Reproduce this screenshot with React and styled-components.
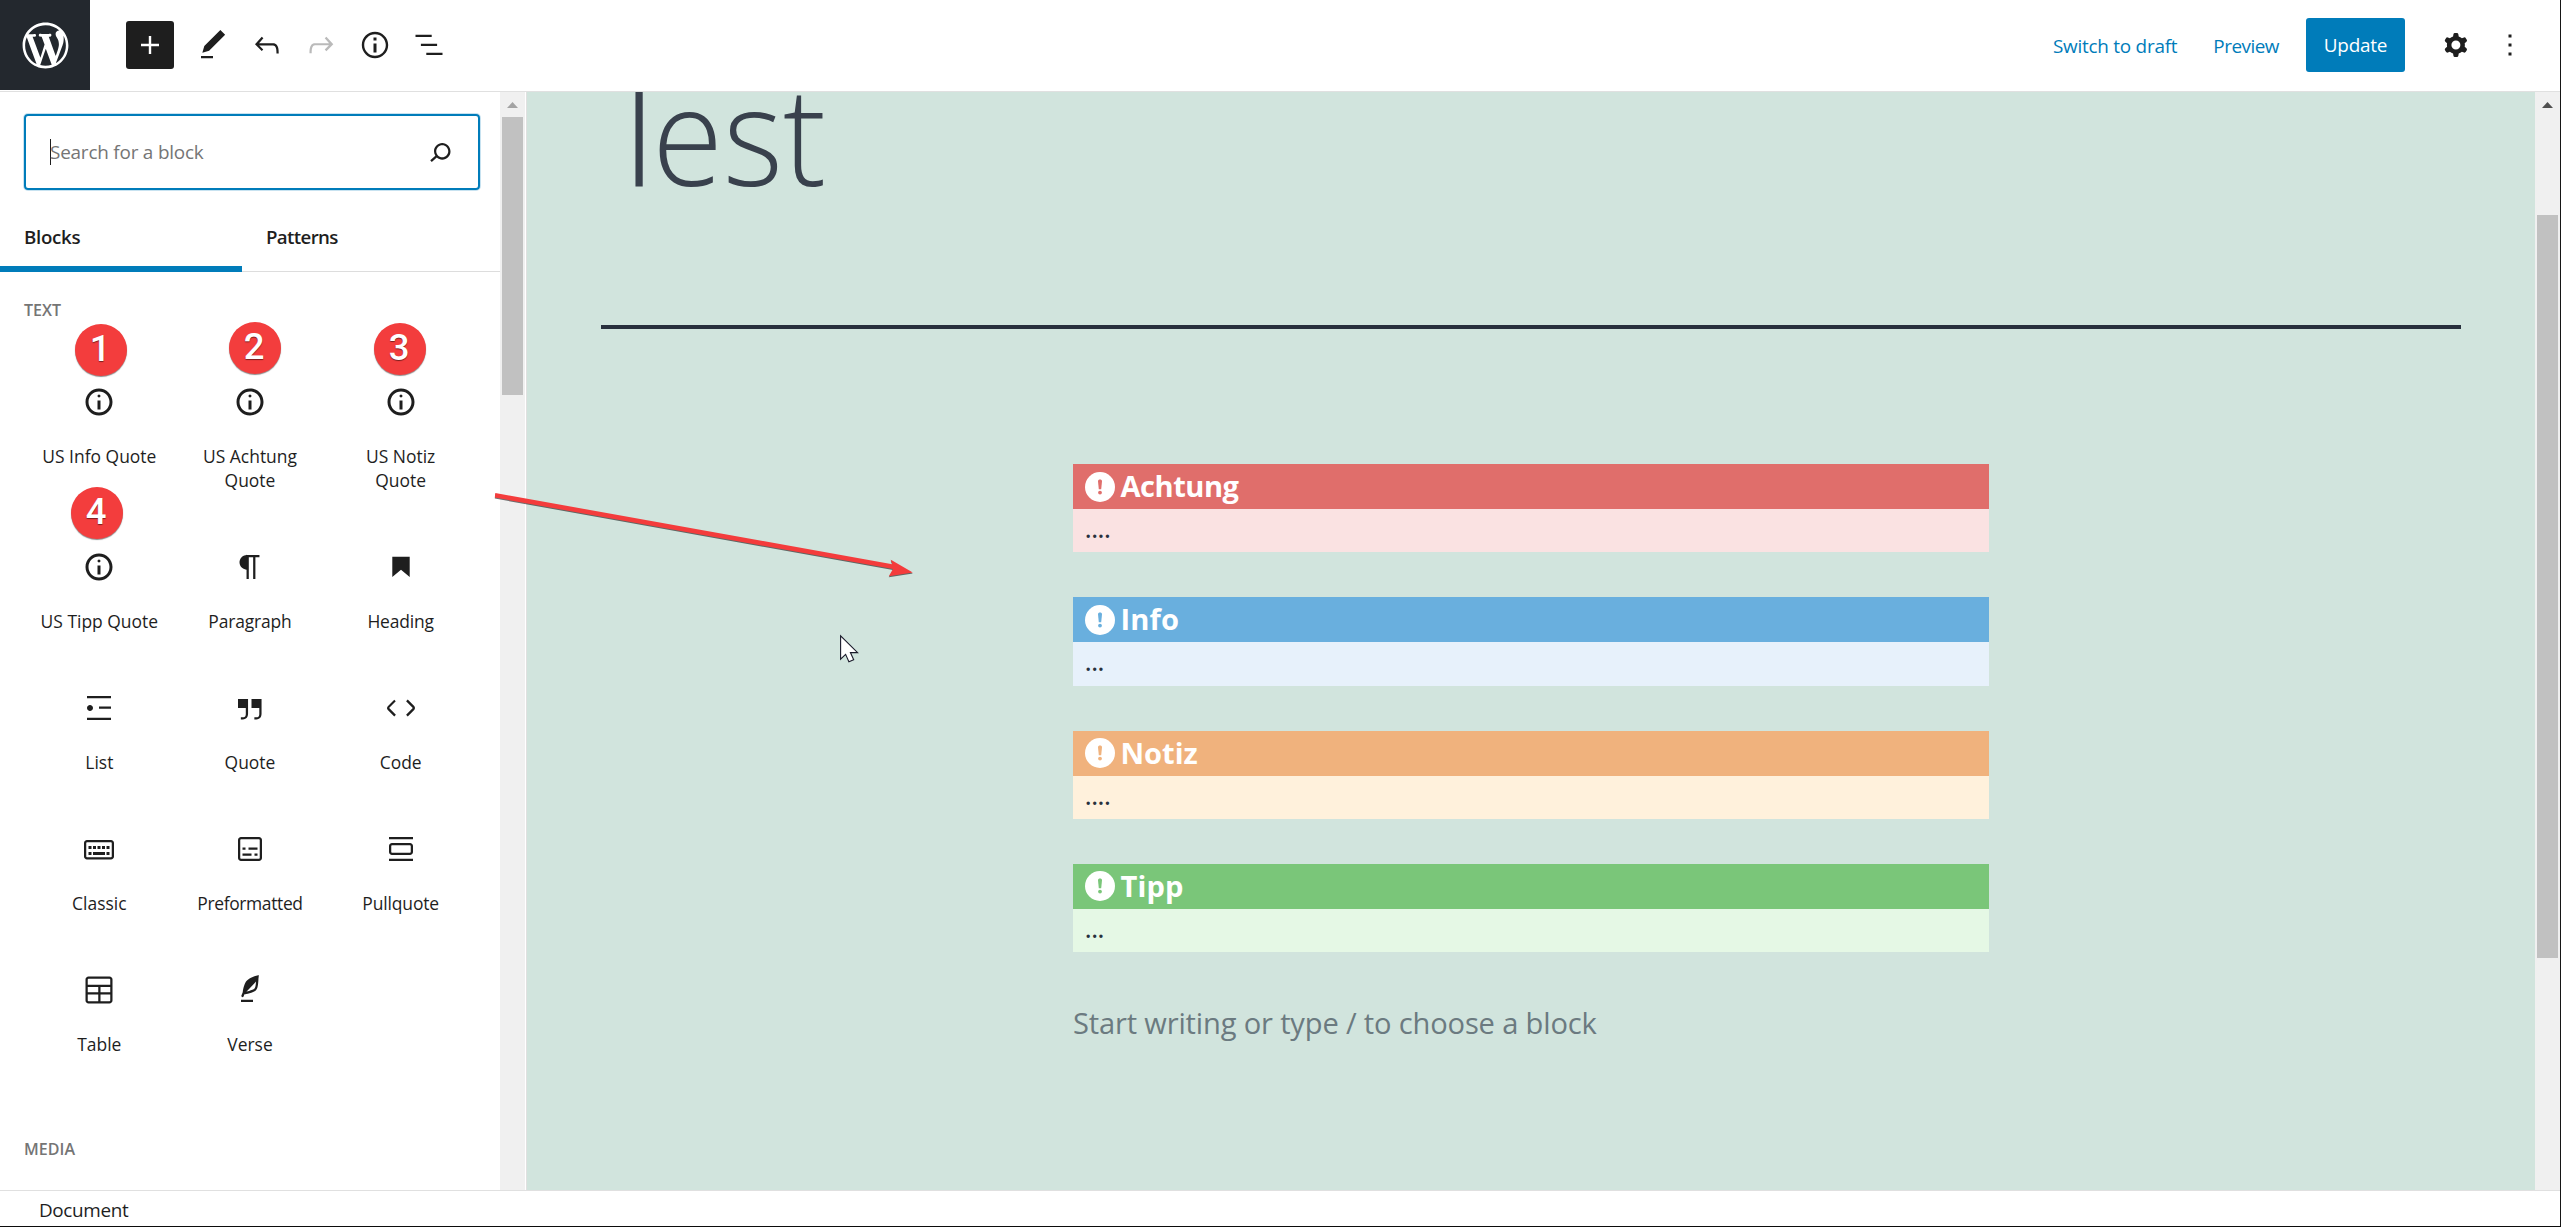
import React from "react";
import styled, { createGlobalStyle } from "styled-components";

const GlobalStyle = createGlobalStyle`
  * { box-sizing: border-box; }
  body {
    margin: 0;
    background: #fff;
    overflow: hidden;
    font-family: "Open Sans", "Noto Sans", sans-serif;
    color: #1e1e1e;
  }
`;

const Frame = styled.div`
  position: relative;
  display: flex;
  flex-direction: column;
  width: 2561px;
  height: 1227px;
  overflow: hidden;
  background: #fff;
  border-right: 1px solid #161616;
  border-bottom: 1px solid #0c0c0c;
`;

/* ---------- header ---------- */

const Header = styled.header`
  flex: none;
  display: flex;
  align-items: flex-start;
  justify-content: space-between;
  height: 92px;
  padding-right: 23px;
  border-bottom: 1px solid #e0e0e0;
`;

const HeaderGroup = styled.div`
  display: flex;
  align-items: center;
  height: 90px;
`;

const HomeLink = styled.div`
  display: flex;
  align-items: center;
  justify-content: center;
  width: 90px;
  height: 90px;
  background: #23282e;
  color: #fff;
`;

const AddButton = styled.button`
  display: flex;
  align-items: center;
  justify-content: center;
  width: 48px;
  height: 48px;
  margin: 0 12px 0 36px;
  padding: 0;
  border: 0;
  border-radius: 3px;
  background: #1e1e1e;
  color: #fff;
`;

const ToolButton = styled.button`
  display: flex;
  align-items: center;
  justify-content: center;
  width: 54px;
  height: 54px;
  padding: 0;
  border: 0;
  background: none;
  color: #1e1e1e;
  opacity: ${(p) => (p.$disabled ? 0.3 : 1)};
`;

const TextButton = styled.button`
  margin-right: ${(p) => p.$gap}px;
  padding: 1px 0 0;
  border: 0;
  background: none;
  color: #007cba;
  font: 400 18.9px/36px "Open Sans", sans-serif;
  letter-spacing: ${(p) => p.$track}px;
`;

const UpdateButton = styled.button`
  width: 99px;
  height: 54px;
  margin-right: 24px;
  padding: 1px 0 0;
  border: 0;
  border-radius: 3px;
  background: #007cba;
  color: #fff;
  font: 400 18.9px/53px "Open Sans", sans-serif;
  letter-spacing: -0.23px;
`;

/* ---------- body ---------- */

const Body = styled.div`
  flex: 1;
  display: flex;
  min-height: 0;
`;

const Inserter = styled.aside`
  flex: none;
  display: flex;
  width: 527px;
  border-right: 1px solid #e0e0e0;
`;

const InserterMain = styled.div`
  width: 500px;
  overflow: hidden;
`;

const SearchBox = styled.div`
  display: flex;
  align-items: center;
  justify-content: space-between;
  width: 456px;
  height: 76px;
  margin: 22px 0 0 24px;
  padding: 0 20px 0 24px;
  border: 2px solid #007cba;
  border-radius: 4px;
  box-shadow: 0 0 0 1px rgba(0, 124, 186, 0.22);
`;

const SearchText = styled.span`
  height: 26px;
  border-left: 1px solid #1e1e1e;
  color: #757575;
  font-size: 18.9px;
  line-height: 27px;
  letter-spacing: -0.2px;
  white-space: nowrap;
  text-indent: -1px;
`;

const Tabs = styled.div`
  display: flex;
  height: 70px;
  margin-top: 12px;
  box-shadow: inset 0 -1px 0 #ddd;
`;

const Tab = styled.div`
  width: 242px;
  padding-left: 24px;
  border-bottom: 6px solid ${(p) => (p.$active ? "#007cba" : "transparent")};
  font-size: 18.7px;
  font-weight: 600;
  line-height: 70px;
  letter-spacing: ${(p) => p.$track}px;
`;

const SectionTitle = styled.h2`
  margin: ${(p) => p.$top}px 0 0 24px;
  color: #757575;
  font-size: 16px;
  font-weight: 600;
  line-height: 24px;
  letter-spacing: 0.05px;
  text-transform: uppercase;
`;

const BlockGrid = styled.div`
  display: grid;
  grid-template-columns: repeat(3, minmax(0, 1fr));
  width: 452px;
  margin: 41px 0 0 24px;
`;

const Tile = styled.div`
  display: flex;
  flex-direction: column;
  align-items: center;
  gap: 15px;
  padding: 12px 0 36px;
`;

const TileIcon = styled.span`
  display: flex;
  align-items: center;
  justify-content: center;
  width: 54px;
  height: 54px;
`;

const TileLabel = styled.span`
  font-size: 17.46px;
  line-height: 24px;
  letter-spacing: ${(p) => p.$track || 0}px;
  text-align: center;
  white-space: pre;
`;

const Scrollbar = styled.div`
  flex: none;
  display: flex;
  flex-direction: column;
  align-items: center;
  width: 25px;
  background: #f0f0f0;
`;

const ScrollArrow = styled.span`
  width: 11px;
  height: 6px;
  margin-top: 10px;
  background: ${(p) => p.$color};
  clip-path: polygon(50% 0, 100% 100%, 0 100%);
`;

const ScrollThumb = styled.span`
  width: 21px;
  height: ${(p) => p.$size}px;
  margin-top: ${(p) => p.$offset}px;
  background: #c1c1c1;
`;

/* ---------- canvas ---------- */

const Canvas = styled.main`
  flex: 1;
  min-width: 0;
  padding: 0 74px;
  overflow: hidden;
  background: #d1e4dd;
  color: #28303d;
`;

const PostTitle = styled.h1`
  margin: -27px 0 0 1px;
  color: #39414d;
  font-size: 137px;
  font-weight: 300;
  line-height: 136px;
  white-space: nowrap;
  transform: scaleX(0.94);
  transform-origin: left;
`;

const Initial = styled.span`
  margin-right: -25.5px;
  font-size: 1.1em;
  line-height: 0;
`;

const Separator = styled.hr`
  height: 4px;
  margin: 124px 0 0;
  border: 0;
  background: #28303d;
`;

const Column = styled.div`
  display: flex;
  flex-direction: column;
  gap: 45px;
  width: 916px;
  margin: 135px auto 0;
`;

const Callout = styled.section`
  display: flex;
  flex-direction: column;
  height: 88.33px;
  background: ${(p) => p.$body};
`;

const CalloutHead = styled.header`
  display: flex;
  align-items: center;
  gap: 5.5px;
  height: 45px;
  padding-left: 12px;
  background: ${(p) => p.$color};
  color: #fff;
  font-size: 29.1px;
  font-weight: 700;
  line-height: 45px;
  letter-spacing: ${(p) => p.$track}px;
`;

const CalloutBody = styled.p`
  margin: 0;
  padding-left: 11.5px;
  font-size: 28px;
  line-height: 36px;
  letter-spacing: -0.95px;
`;

const Prompt = styled.p`
  margin: 1px 0 0 0;
  color: #6b7a80;
  font-size: 29.1px;
  line-height: 50px;
  letter-spacing: -0.165px;
`;

/* ---------- footer ---------- */

const Footer = styled.footer`
  flex: none;
  height: 36px;
  padding-left: 39px;
  border-top: 1px solid #e0e0e0;
  font-size: 18.9px;
  line-height: 38px;
  letter-spacing: -0.35px;
`;

/* ---------- annotations ---------- */

const Badge = styled.span`
  position: absolute;
  left: ${(p) => p.$x}px;
  top: ${(p) => p.$y}px;
  width: 52px;
  height: 52px;
  padding-right: 2px;
  border-radius: 50%;
  background: #f33d3d;
  box-shadow: 0 1px 1px rgba(0, 0, 0, 0.45);
  color: #fff;
  font: 500 36.5px/49px Roboto, "Liberation Sans", sans-serif;
  text-align: center;
  text-shadow: 0 1px 1px rgba(0, 0, 0, 0.5);
`;

const Arrow = styled.svg`
  position: absolute;
  left: 485px;
  top: 485px;
  filter: drop-shadow(0 1px 0.6px rgba(0, 0, 0, 0.55));
`;

const Pointer = styled.svg`
  position: absolute;
  left: 838px;
  top: 633px;
`;

const PATHS = {
  plus: "M18 11.2h-5.2V6h-1.6v5.2H6v1.6h5.2V18h1.6v-5.2H18z",
  edit: "M20.1 5.1L16.9 2 6.2 12.7l-1.3 4.4 4.5-1.3L20.1 5.1zM4 20.8h8v-1.5H4v1.5z",
  undo: "M18.3 11.7c-.6-.6-1.4-.9-2.3-.9H6.7l2.9-3.3-1.1-1-4.5 5L8.5 16l1-1-2.7-2.7H16c.5 0 .9.2 1.3.5 1 1 1 3.4 1 4.5v.3h1.5v-.2c0-1.5 0-4.3-1.5-5.7z",
  redo: "M15.6 6.5l-1.1 1 2.9 3.3H8c-.9 0-1.7.3-2.3.9-1.4 1.5-1.4 4.2-1.4 5.6v.2h1.5v-.3c0-1.1 0-3.5 1-4.5.3-.3.7-.5 1.3-.5h9.2L14.5 15l1.1 1.1 4.6-4.6-4.6-5z",
  info: "M12 3.2c-4.8 0-8.8 3.9-8.8 8.8 0 4.8 3.9 8.8 8.8 8.8 4.8 0 8.8-3.9 8.8-8.8 0-4.8-4-8.8-8.8-8.8zm0 16c-4 0-7.2-3.3-7.2-7.2C4.8 8 8 4.8 12 4.8s7.2 3.3 7.2 7.2c0 4-3.2 7.2-7.2 7.2zM11 17h2v-6h-2v6zm0-8h2V7h-2v2z",
  outline: "M13.8 5.2H3v1.5h10.8V5.2zm-3.6 12v1.5H21v-1.5H10.2zm7.2-6H6.6v1.5h10.8v-1.5z",
  search: "M13.5 6C10.5 6 8 8.5 8 11.5c0 1.1.3 2.1.9 3l-3.4 3 1 1.1 3.4-2.9c1 .9 2.2 1.4 3.6 1.4 3 0 5.5-2.5 5.5-5.5C19 8.5 16.5 6 13.5 6zm0 9.5c-2.2 0-4-1.8-4-4s1.8-4 4-4 4 1.8 4 4-1.8 4-4 4z",
  paragraph: "M18.3 4H9.9v-.1l-.9.2c-2.3.4-4 2.4-4 4.8s1.7 4.4 4 4.8l.7.1V20h1.5V5.5h2.9V20h1.5V5.5h2.7V4z",
  heading: "M6.2 5.2v13.4l5.8-4.8 5.8 4.8V5.2z",
  list: "M4 4v1.5h16V4H4zm8 8.5h8V11h-8v1.5zM4 20h16v-1.5H4V20zm4-8c0-1.1-.9-2-2-2s-2 .9-2 2 .9 2 2 2 2-.9 2-2z",
  quote: "M13 6v6h5.2v4c0 .8-.2 1.4-.5 1.7-.6.6-1.6.6-2.5.5h-.3v1.5h.5c1 0 2.3-.1 3.3-1 .6-.6 1-1.6 1-2.8V6H13zm-9 6h5.2v4c0 .8-.2 1.4-.5 1.7-.6.6-1.6.6-2.5.5h-.3v1.5h.5c1 0 2.3-.1 3.3-1 .6-.6 1-1.6 1-2.8V6H4v6z",
  code: "M20.8 10.7l-4.3-4.3-1.1 1.1 4.3 4.3c.1.1.1.3 0 .4l-4.3 4.3 1.1 1.1 4.3-4.3c.7-.8.7-1.9 0-2.6zM4.2 11.8l4.3-4.3-1-1-4.3 4.3c-.7.7-.7 1.8 0 2.5l4.3 4.3 1.1-1.1-4.3-4.3c-.2-.1-.2-.3-.1-.4z",
  classic: "M20 6H4c-1.1 0-2 .9-2 2v9c0 1.1.9 2 2 2h16c1.1 0 2-.9 2-2V8c0-1.1-.9-2-2-2zm.5 11c0 .3-.2.5-.5.5H4c-.3 0-.5-.2-.5-.5V8c0-.3.2-.5.5-.5h16c.3 0 .5.2.5.5v9zM10 10H8v2h2v-2zm-5 2h2v-2H5v2zm8-2h-2v2h2v-2zm-5 6h8v-2H8v2zm6-4h2v-2h-2v2zm3 0h2v-2h-2v2zm0 4h2v-2h-2v2zM5 16h2v-2H5v2z",
  preformatted: "M18 4H6c-1.1 0-2 .9-2 2v12c0 1.1.9 2 2 2h12c1.1 0 2-.9 2-2V6c0-1.1-.9-2-2-2zm.5 14c0 .3-.2.5-.5.5H6c-.3 0-.5-.2-.5-.5V6c0-.3.2-.5.5-.5h12c.3 0 .5.2.5.5v12zM7 16.5h6V15H7v1.5zm4-4h6V11h-6v1.5zM9 11H7v1.5h2V11zm6 5.5h2V15h-2v1.5z",
  pullquote: "M18 8H6c-1.1 0-2 .9-2 2v4c0 1.1.9 2 2 2h12c1.1 0 2-.9 2-2v-4c0-1.1-.9-2-2-2zm.5 6c0 .3-.2.5-.5.5H6c-.3 0-.5-.2-.5-.5v-4c0-.3.2-.5.5-.5h12c.3 0 .5.2.5.5v4zM4 4v1.5h16V4H4zm0 16h16v-1.5H4V20z",
  table: "M19 3H5c-1.1 0-2 .9-2 2v14c0 1.1.9 2 2 2h14c1.1 0 2-.9 2-2V5c0-1.1-.9-2-2-2zM5 4.5h14c.3 0 .5.2.5.5v3.5h-15V5c0-.3.2-.5.5-.5zm8 5.5h6.5v3.5H13V10zm-1.5 3.5h-7V10h7v3.5zm-7 5.5v-4h7v4.5H5c-.3 0-.5-.2-.5-.5zm14.5.5h-6V15h6.5v4c0 .3-.2.5-.5.5z",
  verse: "M17.8 2l-.9.3c-.1 0-3.6 1-5.2 2.1C10 5.5 9.3 6.5 8.9 7.1c-.6.9-1.7 4.7-1.7 6.3l-.9 2.3c-.2.4 0 .8.4 1 .1 0 .2.1.3.1.3 0 .6-.2.7-.5l.6-1.5c.3 0 .7-.1 1.2-.2.7-.1 1.4-.3 2.2-.5.8-.2 1.6-.5 2.4-.8.7-.3 1.4-.7 1.9-1.2s.8-1.2 1-1.9c.2-.7.3-1.6.4-2.4.1-.8.1-1.7.2-2.5 0-.8.1-1.5.2-2.1V2zm-1.9 5.6c-.1.8-.2 1.5-.3 2.1-.2.6-.4 1-.6 1.3-.3.3-.8.6-1.4.9-.7.3-1.4.5-2.2.8-.6.2-1.3.3-1.8.4L15 7.5c.3-.3.6-.7 1-1.1 0 .4 0 .8-.1 1.2zM6 20h8v-1.5H6V20z",
  more: "M13 19h-2v-2h2v2zm0-6h-2v-2h2v2zm0-6h-2V5h2v2z",
  cog: "M10.289 4.836A1 1 0 0111.275 4h1.306a1 1 0 01.987.836l.244 1.466c.787.26 1.503.679 2.108 1.218l1.393-.522a1 1 0 011.216.437l.653 1.13a1 1 0 01-.23 1.273l-1.148.944a6.025 6.025 0 010 2.435l1.149.946a1 1 0 01.23 1.272l-.653 1.13a1 1 0 01-1.216.437l-1.394-.522c-.605.54-1.32.958-2.108 1.218l-.244 1.466a1 1 0 01-.987.836h-1.306a1 1 0 01-.986-.836l-.244-1.466a5.995 5.995 0 01-2.108-1.218l-1.394.522a1 1 0 01-1.217-.436l-.653-1.131a1 1 0 01.23-1.272l1.149-.946a6.026 6.026 0 010-2.435l-1.148-.944a1 1 0 01-.23-1.272l.653-1.131a1 1 0 011.217-.437l1.393.522a5.994 5.994 0 012.108-1.218l.244-1.466zM14.929 12a3 3 0 11-6 0 3 3 0 016 0z",
};

const INFO_OUTLINE =
  "M9 15h2V9H9v6zm1-10c-.5 0-1 .5-1 1s.5 1 1 1 1-.5 1-1-.5-1-1-1zm0-4c-5 0-9 4-9 9s4 9 9 9 9-4 9-9-4-9-9-9zm0 16c-3.9 0-7-3.1-7-7s3.1-7 7-7 7 3.1 7 7-3.1 7-7 7z";

const WORDPRESS =
  "M20 10c0-5.51-4.49-10-10-10C4.48 0 0 4.49 0 10c0 5.52 4.48 10 10 10 5.51 0 10-4.48 10-10zM7.78 15.37L4.37 6.22c.55-.02 1.17-.08 1.17-.08.5-.06.44-1.13-.06-1.11 0 0-1.45.11-2.37.11-.18 0-.37 0-.58-.01C4.12 2.69 6.87 1.11 10 1.11c2.33 0 4.45.87 6.05 2.34-.68-.11-1.65.39-1.65 1.58 0 .74.45 1.36.9 2.1.35.61.55 1.36.55 2.46 0 1.49-1.4 5-1.4 5l-3.03-8.37c.54-.02.82-.17.82-.17.5-.05.44-1.25-.06-1.22 0 0-1.44.12-2.38.12-.87 0-2.33-.12-2.33-.12-.5-.03-.56 1.2-.06 1.22l.92.08 1.26 3.41zM17.41 10c.24-.64.74-1.87.43-4.25.7 1.29 1.05 2.71 1.05 4.25 0 3.29-1.73 6.24-4.4 7.78.97-2.59 1.94-5.2 2.92-7.78zM6.1 18.09C3.12 16.65 1.11 13.53 1.11 10c0-1.3.23-2.48.72-3.59C3.25 10.3 4.67 14.2 6.1 18.09zm4.03-6.63l2.58 6.98c-.86.29-1.76.45-2.71.45-.79 0-1.57-.11-2.29-.33.81-2.38 1.62-4.74 2.42-7.1z";

function Icon({ name }) {
  return (
    <svg width="36" height="36" viewBox="0 0 24 24" fill="currentColor" fillRule={name === "cog" ? "evenodd" : "nonzero"}>
      <path d={PATHS[name]} />
    </svg>
  );
}

function InfoOutline() {
  return (
    <svg width="30" height="30" viewBox="0 0 20 20" fill="currentColor">
      <path d={INFO_OUTLINE} />
    </svg>
  );
}

function AlertMark({ color }) {
  return (
    <svg width="30" height="30" viewBox="0 0 30 30">
      <circle cx="15" cy="15" r="15" fill="#fff" />
      <path d="M13 9.2c0-1.1.8-1.6 2-1.6s2 .5 2 1.6l-.8 8.1h-2.4z" fill={color} />
      <circle cx="15" cy="20.6" r="1.9" fill={color} />
    </svg>
  );
}

const TILES = [
  ["US Info Quote", "note"],
  ["US Achtung\nQuote", "note"],
  ["US Notiz\nQuote", "note"],
  ["US Tipp Quote", "note"],
  ["Paragraph", "paragraph", -0.15],
  ["Heading", "heading", -0.15],
  ["List", "list"],
  ["Quote", "quote"],
  ["Code", "code"],
  ["Classic", "classic"],
  ["Preformatted", "preformatted", -0.36],
  ["Pullquote", "pullquote", -0.13],
  ["Table", "table"],
  ["Verse", "verse"],
];

const CALLOUTS = [
  { title: "Achtung", text: "....", color: "#e06e6b", body: "#fae2e2", track: -0.5 },
  { title: "Info", text: "...", color: "#69afde", body: "#e7f1fb", track: 0.16 },
  { title: "Notiz", text: "....", color: "#f0b27d", body: "#fff1dc", track: -0.04 },
  { title: "Tipp", text: "...", color: "#7ac679", body: "#e5f8e5", track: 0.12 },
];

const BADGES = [
  [75, 324],
  [229, 322],
  [374, 323],
  [71, 487],
];

export default function App() {
  return (
    <Frame>
      <GlobalStyle />
      <Header>
        <HeaderGroup>
          <HomeLink>
            <svg width="55" height="55" viewBox="-2 -2 24 24" fill="currentColor">
              <path d={WORDPRESS} />
            </svg>
          </HomeLink>
          <AddButton><Icon name="plus" /></AddButton>
          <ToolButton><Icon name="edit" /></ToolButton>
          <ToolButton><Icon name="undo" /></ToolButton>
          <ToolButton $disabled><Icon name="redo" /></ToolButton>
          <ToolButton><Icon name="info" /></ToolButton>
          <ToolButton><Icon name="outline" /></ToolButton>
        </HeaderGroup>
        <HeaderGroup>
          <TextButton $gap={36} $track={-0.23}>Switch to draft</TextButton>
          <TextButton $gap={27} $track={-0.5}>Preview</TextButton>
          <UpdateButton>Update</UpdateButton>
          <ToolButton><Icon name="cog" /></ToolButton>
          <ToolButton><Icon name="more" /></ToolButton>
        </HeaderGroup>
      </Header>

      <Body>
        <Inserter>
          <InserterMain>
            <SearchBox>
              <SearchText>Search for a block</SearchText>
              <Icon name="search" />
            </SearchBox>
            <Tabs>
              <Tab $active $track={-0.3}>Blocks</Tab>
              <Tab $track={-0.65}>Patterns</Tab>
            </Tabs>
            <SectionTitle $top={26}>Text</SectionTitle>
            <BlockGrid>
              {TILES.map(([label, icon, track]) => (
                <Tile key={label}>
                  <TileIcon>{icon === "note" ? <InfoOutline /> : <Icon name={icon} />}</TileIcon>
                  <TileLabel $track={track}>{label}</TileLabel>
                </Tile>
              ))}
            </BlockGrid>
            <SectionTitle $top={45}>Media</SectionTitle>
          </InserterMain>
          <Scrollbar>
            <ScrollArrow $color="#a3a3a3" />
            <ScrollThumb $offset={9} $size={278} />
          </Scrollbar>
        </Inserter>

        <Canvas>
          <PostTitle><Initial>T</Initial>est</PostTitle>
          <Separator />
          <Column>
            {CALLOUTS.map((c) => (
              <Callout key={c.title} $body={c.body}>
                <CalloutHead $color={c.color} $track={c.track}>
                  <AlertMark color={c.color} />
                  {c.title}
                </CalloutHead>
                <CalloutBody>{c.text}</CalloutBody>
              </Callout>
            ))}
            <Prompt>Start writing or type / to choose a block</Prompt>
          </Column>
        </Canvas>
        <Scrollbar>
          <ScrollArrow $color="#505050" />
          <ScrollThumb $offset={107} $size={743} />
        </Scrollbar>
      </Body>

      <Footer>Document</Footer>

      {BADGES.map(([x, y], i) => (
        <Badge key={i} $x={x} $y={y}>{i + 1}</Badge>
      ))}
      <Arrow width="440" height="100" viewBox="0 0 440 100">
        <path d="M10.3 8l397 71.3-1.6-4.6L406.3 75 427.8 87.4 403.8 91.3 408 84 9.8 12.6z" fill="#f43c3c" />
      </Arrow>
      <Pointer width="24" height="32" viewBox="0 0 24 32">
        <path d="M2.6 2.8v23.4l5-4.8 3.3 7.4 4.8-2-3.3-7.2h7.2z" fill="#fff" stroke="#1a1a2a" strokeWidth="1.1" />
      </Pointer>
    </Frame>
  );
}
